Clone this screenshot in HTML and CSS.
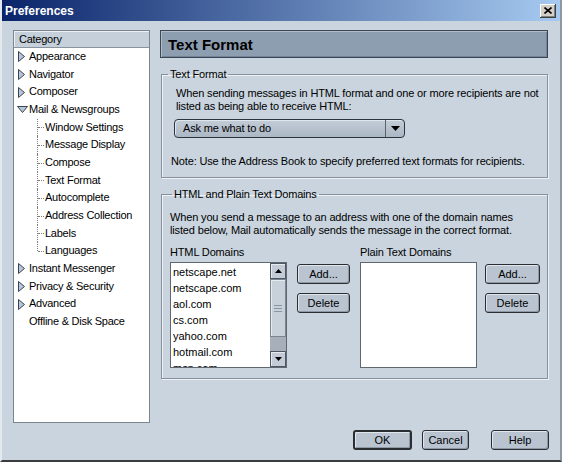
FILE: index.html
```html
<!DOCTYPE html>
<html lang="en">
  <head>
    <meta charset="UTF-8" />
    <title>Preferences</title>
    <link rel="stylesheet" href="styles.css">
  </head>
  <body>
    <div class="window">
      <div class="titlebar">
        <span class="title">Preferences</span>
        <span class="close">
          <svg width="8" height="7" viewBox="0 0 8 7"><path d="M0.5 0.5 L7.5 6.5 M7.5 0.5 L0.5 6.5" stroke="#000" stroke-width="1.6" /></svg>
        </span>
      </div>

      <div class="main">
        <div class="sidebar">
          <div class="catHead">Category</div>
          <ul class="tree">
            <li class="node"><span class="twisty"><svg class="tw-r" width="7" height="11" viewBox="0 0 7 11"><path d="M0.5 0.5 L6.5 5.5 L0.5 10.5 Z" fill="#b7c6d8" stroke="#3b4452" /></svg></span>Appearance</li>
            <li class="node"><span class="twisty"><svg class="tw-r" width="7" height="11" viewBox="0 0 7 11"><path d="M0.5 0.5 L6.5 5.5 L0.5 10.5 Z" fill="#b7c6d8" stroke="#3b4452" /></svg></span>Navigator</li>
            <li class="node"><span class="twisty"><svg class="tw-r" width="7" height="11" viewBox="0 0 7 11"><path d="M0.5 0.5 L6.5 5.5 L0.5 10.5 Z" fill="#b7c6d8" stroke="#3b4452" /></svg></span>Composer</li>
            <li class="node"><span class="twisty"><svg width="11" height="7" viewBox="0 0 11 7"><path d="M0.5 0.5 L10.5 0.5 L5.5 6.5 Z" fill="#b7c6d8" stroke="#3b4452" /></svg></span>Mail &amp; Newsgroups</li>
            <li class="leaf">Window Settings</li>
            <li class="leaf">Message Display</li>
            <li class="leaf">Compose</li>
            <li class="leaf">Text Format</li>
            <li class="leaf">Autocomplete</li>
            <li class="leaf">Address Collection</li>
            <li class="leaf">Labels</li>
            <li class="leaf last">Languages</li>
            <li class="node"><span class="twisty"><svg class="tw-r" width="7" height="11" viewBox="0 0 7 11"><path d="M0.5 0.5 L6.5 5.5 L0.5 10.5 Z" fill="#b7c6d8" stroke="#3b4452" /></svg></span>Instant Messenger</li>
            <li class="node"><span class="twisty"><svg class="tw-r" width="7" height="11" viewBox="0 0 7 11"><path d="M0.5 0.5 L6.5 5.5 L0.5 10.5 Z" fill="#b7c6d8" stroke="#3b4452" /></svg></span>Privacy &amp; Security</li>
            <li class="node"><span class="twisty"><svg class="tw-r" width="7" height="11" viewBox="0 0 7 11"><path d="M0.5 0.5 L6.5 5.5 L0.5 10.5 Z" fill="#b7c6d8" stroke="#3b4452" /></svg></span>Advanced</li>
            <li class="node"><span class="twisty"></span>Offline &amp; Disk Space</li>
          </ul>
        </div>

        <div class="panel">
          <div class="panelHead">Text Format</div>

          <fieldset class="group formatGroup">
            <legend>Text Format</legend>
            <p class="intro">When sending messages in HTML format and one or more recipients are not<br>listed as being able to receive HTML:</p>
            <div class="select">
              <span class="selectText">Ask me what to do</span>
              <span class="selectBtn"><svg width="9" height="5" viewBox="0 0 9 5"><path d="M0 0 H9 L4.5 5 Z" fill="#000" /></svg></span>
            </div>
            <p class="note">Note: Use the Address Book to specify preferred text formats for recipients.</p>
          </fieldset>

          <fieldset class="group domainGroup">
            <legend>HTML and Plain Text Domains</legend>
            <p class="desc">When you send a message to an address with one of the domain names<br>listed below, Mail automatically sends the message in the correct format.</p>
            <div class="columns">
              <div class="col">
                <div class="colLabel">HTML Domains</div>
                <div class="colRow">
                  <div class="listbox">
                    <ul class="items">
                      <li>netscape.net</li>
                      <li>netscape.com</li>
                      <li>aol.com</li>
                      <li>cs.com</li>
                      <li>yahoo.com</li>
                      <li>hotmail.com</li>
                      <li>msn.com</li>
                    </ul>
                    <div class="scrollbar">
                      <div class="sbBtn"><svg width="7" height="4" viewBox="0 0 7 4"><path d="M0 4 H7 L3.5 0 Z" fill="#000" /></svg></div>
                      <div class="thumb"><span class="grip"></span></div>
                      <div class="track"></div>
                      <div class="sbBtn"><svg width="7" height="4" viewBox="0 0 7 4"><path d="M0 0 H7 L3.5 4 Z" fill="#000" /></svg></div>
                    </div>
                  </div>
                  <div class="btnCol">
                    <button class="btn small">Add...</button>
                    <button class="btn small">Delete</button>
                  </div>
                </div>
              </div>
              <div class="col">
                <div class="colLabel">Plain Text Domains</div>
                <div class="colRow">
                  <div class="listbox"></div>
                  <div class="btnCol wide">
                    <button class="btn small">Add...</button>
                    <button class="btn small">Delete</button>
                  </div>
                </div>
              </div>
            </div>
          </fieldset>
        </div>
      </div>

      <div class="footer">
        <button class="btn default okBtn">OK</button>
        <button class="btn cancelBtn">Cancel</button>
        <button class="btn helpBtn">Help</button>
      </div>
    </div>
  </body>
</html>
```

FILE: styles.css
```css
body {
  margin: 0;
  font-family: "Liberation Sans", Arial, sans-serif;
  font-size: 11px;
  letter-spacing: -0.15px;
  color: #000;
}

.window {
  width: 562px;
  height: 462px;
  box-sizing: border-box;
  background: #c9d4de;
  border-left: 2px solid #e4e9ee;
  border-right: 2px solid #8d98a3;
  border-bottom: 2px solid #3a3d40;
  display: flex;
  flex-direction: column;
}

/* title bar */
.titlebar {
  height: 21px;
  flex: none;
  display: flex;
  align-items: center;
  justify-content: space-between;
  padding: 0 4px 0 3px;
  background: linear-gradient(to right, #0a246a, #a6caf0);
}

.title {
  color: #fff;
  font-weight: bold;
  font-size: 12px;
  letter-spacing: 0;
}

.close {
  width: 16px;
  height: 14px;
  box-sizing: border-box;
  display: flex;
  align-items: center;
  justify-content: center;
  background: #d4d0c8;
  box-shadow: inset -1px -1px 0 #404040, inset 1px 1px 0 #fff, inset -2px -2px 0 #808080;
}

/* main area */
.main {
  display: flex;
  gap: 10px;
  padding: 9px 12px 0 11px;
}

.sidebar {
  width: 137px;
  height: 393px;
  flex: none;
  box-sizing: border-box;
  background: #fff;
  border: 1px solid #7b858f;
  letter-spacing: -0.25px;
}

.catHead {
  height: 16px;
  line-height: 16px;
  padding-left: 5px;
  background: #c6d0da;
  border-bottom: 1px solid #8a949e;
  box-shadow: inset 1px 1px 0 #edf1f5;
}

.tree {
  list-style: none;
  margin: 0;
  padding: 0;
}

.tree li {
  height: 17.67px;
  line-height: 17.67px;
  white-space: nowrap;
  position: relative;
}

.node {
  display: flex;
  align-items: center;
  padding-left: 3px;
}

.twisty {
  width: 12px;
  height: 11px;
  display: flex;
  align-items: center;
}

.tw-r {
  margin-left: 1px;
}

.leaf {
  padding-left: 31px;
}

.leaf::before {
  content: "";
  position: absolute;
  left: 23px;
  top: 0;
  bottom: 0;
  border-left: 1px dotted #7d7d7d;
}

.leaf.last::before {
  bottom: 50%;
}

.leaf::after {
  content: "";
  position: absolute;
  left: 24px;
  top: 50%;
  width: 6px;
  border-top: 1px dotted #7d7d7d;
}

/* right panel */
.panel {
  flex: 1;
  display: flex;
  flex-direction: column;
}

.panelHead {
  height: 28px;
  box-sizing: border-box;
  display: flex;
  align-items: center;
  padding-left: 7px;
  font-weight: bold;
  font-size: 15px;
  letter-spacing: 0;
  background: #8e9eb1;
  border: 1px solid #3b4650;
  box-shadow: inset 1px 1px 0 #b0bccb, inset -1px -1px 0 #74839a;
}

.group {
  margin: 10px 0 0 1px;
  padding: 0;
  min-width: 0;
  border: 1px solid #87919b;
  box-shadow: 1px 1px 0 #eef2f6, inset 1px 1px 0 #eef2f6;
}

.group legend {
  padding: 0 2px;
  line-height: 13px;
}

.group p {
  margin: 0;
  line-height: 13px;
  white-space: nowrap;
}

.formatGroup {
  padding-bottom: 9px;
}

.formatGroup legend {
  margin-left: 6px;
}

.intro {
  margin-top: 6px !important;
  padding-left: 14px;
}

.select {
  width: 231px;
  height: 19px;
  box-sizing: border-box;
  margin: 6px 0 0 12px;
  display: flex;
  border: 1px solid #2e343c;
  border-radius: 4px;
  background: linear-gradient(#c3cdd8, #abb7c4);
  box-shadow: inset 1px 1px 0 #dfe6ed;
}

.selectText {
  flex: 1;
  padding-left: 8px;
  line-height: 17px;
}

.selectBtn {
  width: 18px;
  display: flex;
  align-items: center;
  justify-content: center;
  border-left: 1px solid #59636e;
}

.note {
  margin-top: 17px !important;
  padding-left: 9px;
}

.domainGroup {
  padding-bottom: 10px;
}

.domainGroup legend {
  margin-left: 10px;
  letter-spacing: -0.2px;
}

.desc {
  margin-top: 10px !important;
  padding-left: 8px;
}

.columns {
  display: flex;
  gap: 10px;
  margin-top: 9px;
  padding-left: 8px;
}

.col {
  display: flex;
  flex-direction: column;
}

.colLabel {
  line-height: 13px;
}

.colRow {
  display: flex;
  gap: 10px;
  margin-top: 3px;
}

.listbox {
  width: 117px;
  height: 106px;
  box-sizing: border-box;
  display: flex;
  background: #fff;
  border: 1px solid #5f6871;
}

.items {
  flex: 1;
  list-style: none;
  margin: 0;
  padding: 1px 0 0 2px;
  line-height: 16px;
  letter-spacing: 0;
  overflow: hidden;
}

.scrollbar {
  width: 16px;
  display: flex;
  flex-direction: column;
}

.sbBtn {
  height: 16px;
  flex: none;
  box-sizing: border-box;
  display: flex;
  align-items: center;
  justify-content: center;
  background: #c3ccd6;
  border: 1px solid #4e5863;
  box-shadow: inset 1px 1px 0 #e6ebf0;
}

.thumb {
  height: 58px;
  flex: none;
  box-sizing: border-box;
  display: flex;
  align-items: center;
  justify-content: center;
  background: #c8d0da;
  border: 1px solid #7a8591;
  box-shadow: inset 1px 1px 0 #e6ebf0;
}

.grip {
  width: 8px;
  height: 7px;
  background: repeating-linear-gradient(#8795a5 0 1px, transparent 1px 3px);
}

.track {
  flex: 1;
  background: #a7b0ba;
}

.btnCol {
  display: flex;
  flex-direction: column;
  gap: 9px;
  margin-top: 2px;
}

.btnCol .btn {
  width: 53px;
}

.btnCol.wide .btn {
  width: 55px;
}

.colRow:has(.wide) {
  gap: 8px;
}

/* buttons */
.btn {
  height: 20px;
  padding: 0;
  box-sizing: border-box;
  font-family: inherit;
  font-size: 11px;
  letter-spacing: 0;
  color: #000;
  background: #b9c4d0;
  border: 1px solid #2a2e33;
  border-radius: 3px;
  box-shadow: inset 1px 1px 0 #e0e6ec, inset -1px -1px 0 #8e99a5;
}

.btn.default {
  border-width: 2px;
}

.footer {
  display: flex;
  justify-content: flex-end;
  margin-top: 7px;
  padding-right: 11px;
}

.okBtn {
  width: 59px;
}

.cancelBtn {
  width: 47px;
  margin-left: 10px;
}

.helpBtn {
  width: 58px;
  margin-left: 22px;
}
```
